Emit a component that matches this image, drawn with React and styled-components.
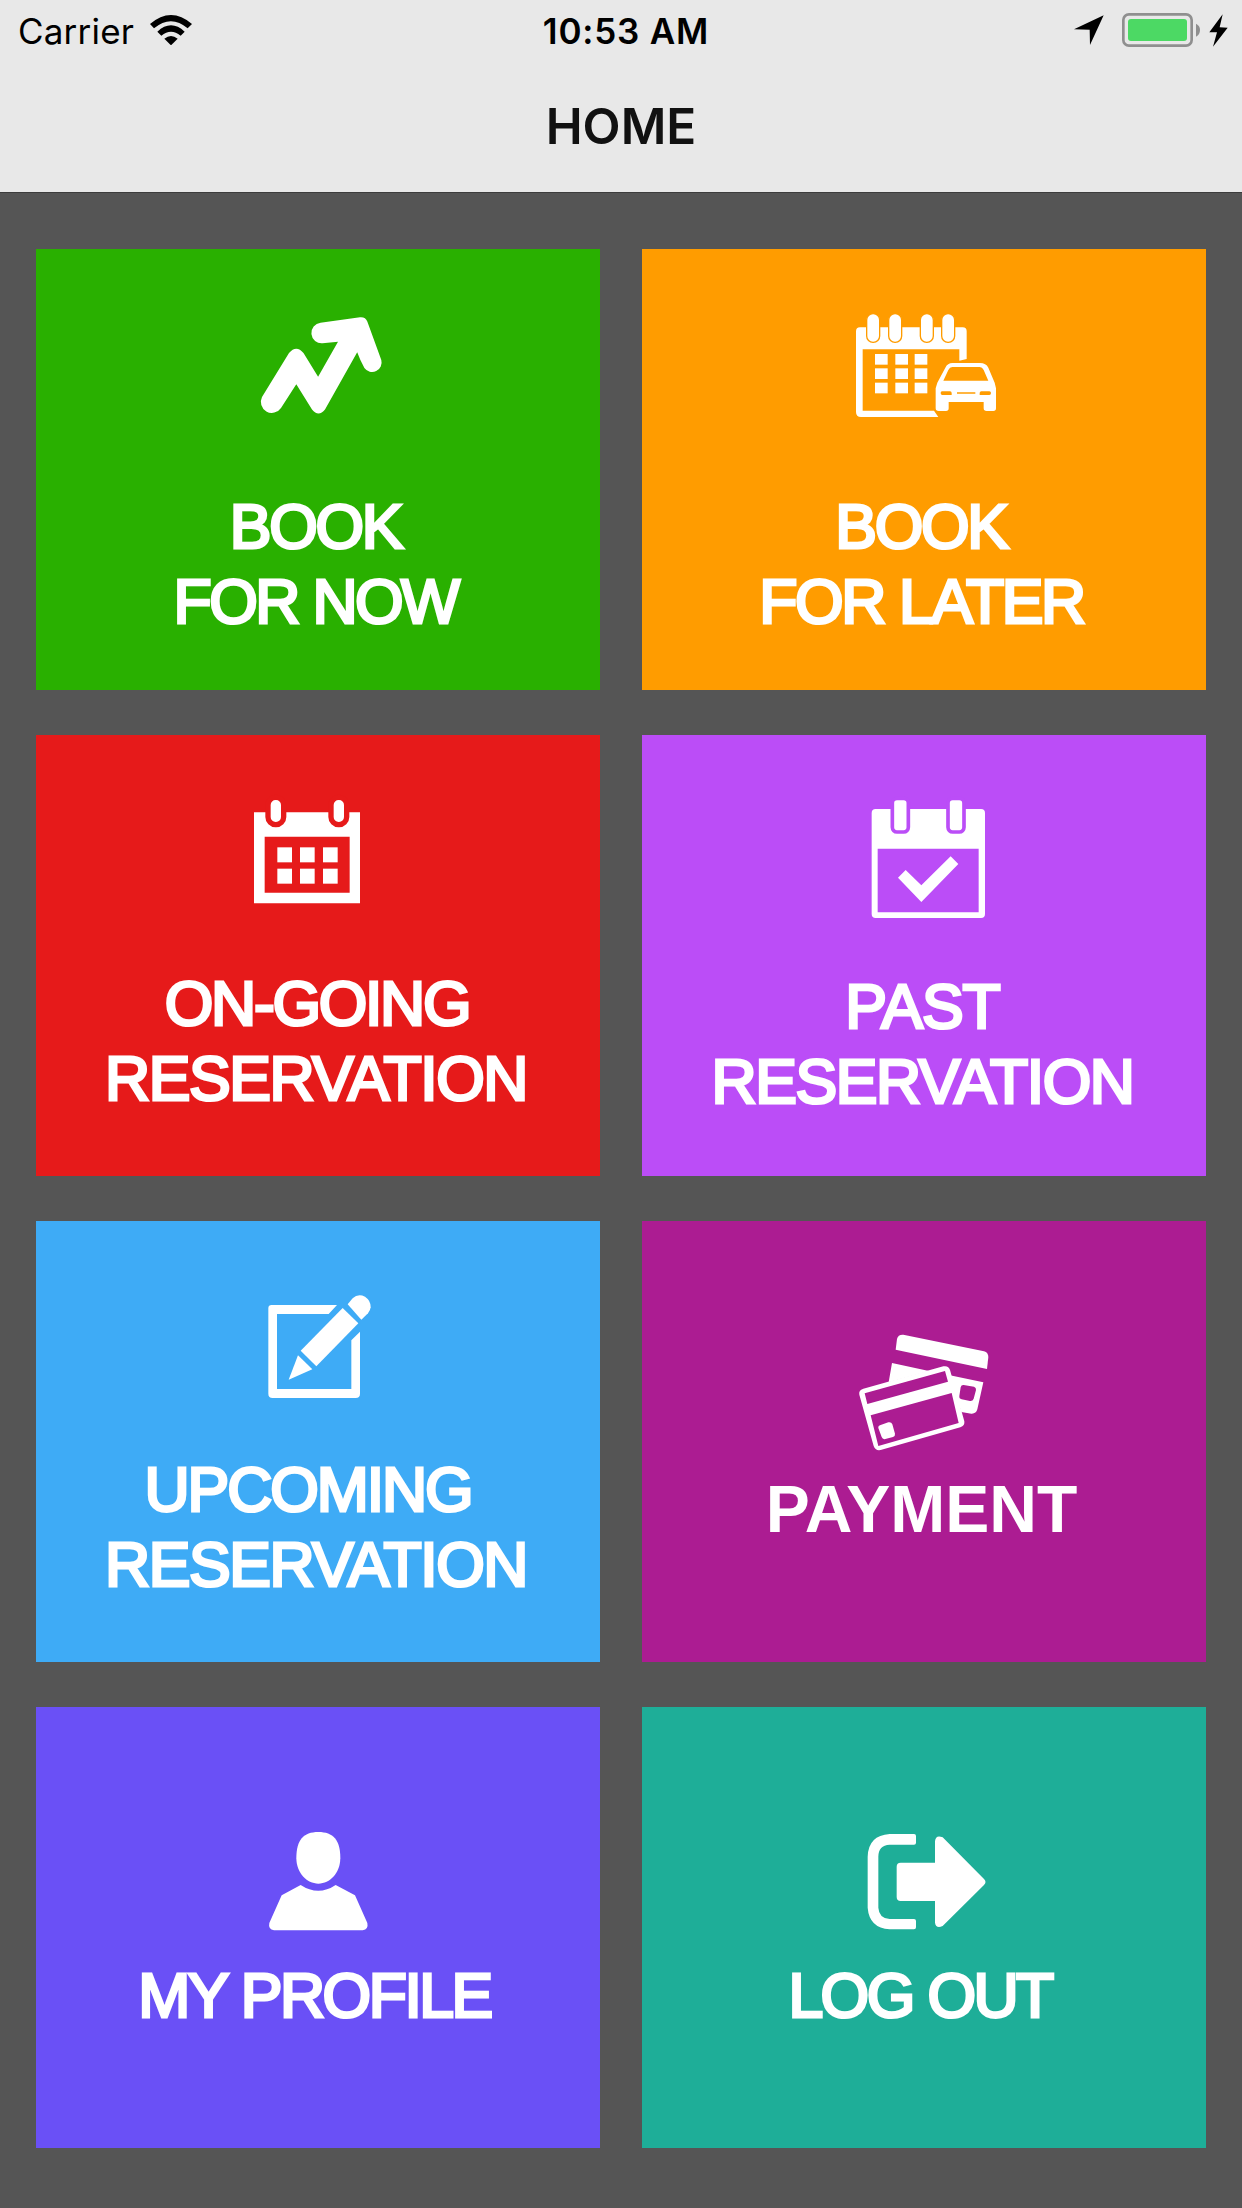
import React from "react";
import styled, { createGlobalStyle } from "styled-components";

const WifiIcon = () => (
  <svg width="42" height="30" viewBox="450 45 126 90">
    <path d="M450 72 Q513 18 576 72 L563 85 Q513 42 462 85Z" />
    <path d="M472 95 Q513 57 554 95 L542 107 Q513 83 484 107Z" />
    <path d="M493 116 Q513 100 533 116 L513 136Z" />
  </svg>
);

const LocationIcon = () => (
  <svg width="30" height="30" viewBox="103 47 90 90">
    <path d="M103 90 L192 48 L151 137 L150 91Z" />
  </svg>
);

const BatteryIcon = () => (
  <svg width="78" height="34" viewBox="246 39 234 102">
    <rect x="250" y="43" width="205" height="94" rx="17" fill="none" stroke="#8f8f8f" strokeWidth="8" />
    <rect x="264" y="57" width="177" height="66" rx="9" fill="#4cd964" />
    <path d="M468 71 Q480 77 480 90 Q480 104 468 110Z" fill="#8f8f8f" />
  </svg>
);

const BoltIcon = () => (
  <svg width="19" height="33" viewBox="506 42 57 99">
    <path d="M547 43 L507 97 H530 L518 140 L562 83 L538 82Z" />
  </svg>
);

const TrendIcon = () => (
  <svg width="160" height="130" viewBox="0 0 160 130">
    <path d="M24 97 L51 53 Q58.3 44.5 65.5 53 L80.1 76.7 L100 41.7 L84.5 43.3 A10.3 10.3 0 0 1 82.5 22.8 L122 17.3 Q127.5 16.8 129.3 21.5 L143.3 60 A9.5 9.5 0 0 1 126.4 68 Q122 60 119.2 52.3 L87 109.5 Q80.5 117.5 74 109.5 L58.3 84.3 L43 108 A11 11 0 0 1 24 97Z" />
  </svg>
);

const CalendarCarIcon = () => (
  <svg width="200" height="150" viewBox="-18 0 600 450">
    <path d="M90 112 H398 Q410 112 410 124 V207 L388 212 V178 H98 V362 H312 L325 381 H93 Q78 381 78 366 V124 Q78 112 90 112Z" />
    {[112, 178, 273, 337].map((x) => (
      <rect key={x} x={x - 2} y="71" width="39" height="86" rx="19" stroke="#ff9c00" strokeWidth="4" />
    ))}
    {[192, 235, 278].map((y) =>
      [135, 196, 254].map((x) => <rect key={`${x}-${y}`} x={x} y={y} width="38" height="32" />)
    )}
    <path
      fillRule="evenodd"
      d="M367 219 H450 Q468 219 475 233 L494 278 L498 295 V355 Q498 363 490 363 H470 Q461 363 461 355 V336 H356 V355 Q356 363 348 363 H326 Q317 363 317 355 V295 L322 278 L346 233 Q353 219 367 219Z M367 231 Q359 231 355 240 L340 272 H475 L461 240 Q457 231 449 231Z M336 304 Q332 304 332 309 Q332 315 337 315 H365 V309 Q365 304 360 304Z M454 304 Q449 304 449 309 V315 H478 Q483 315 483 309 Q483 304 478 304Z M381 307 V311 H436 V307Z"
    />
  </svg>
);

const CalendarGridIcon = () => (
  <svg width="160" height="140" viewBox="24 0 480 420">
    <path fillRule="evenodd" d="M72 97 H390 V370 H72Z M104 170 V338 H359 V170Z" />
    {[122, 311].map((x) => (
      <rect key={x} x={x - 8} y="52" width="47" height="82" rx="23" stroke="#e61a1a" strokeWidth="16" />
    ))}
    {[202, 266].map((y) =>
      [142, 210, 279].map((x) => <rect key={`${x}-${y}`} x={x} y={y} width="44" height="45" />)
    )}
  </svg>
);

const CalendarCheckIcon = () => (
  <svg width="160" height="150" viewBox="-18 0 480 450">
    <path
      fillRule="evenodd"
      d="M77 87 H393 Q405 87 405 99 V402 Q405 414 393 414 H77 Q65 414 65 402 V99 Q65 87 77 87Z M83 206 V397 H386 V206Z"
    />
    {[132, 299].map((x) => (
      <rect key={x} x={x - 5} y="55" width="48" height="101" rx="14" stroke="#bb4df7" strokeWidth="11" />
    ))}
    <path d="M144 293 L167 270 L214 316 L302 229 L325 252 L214 366Z" />
  </svg>
);

const PencilIcon = () => (
  <svg width="140" height="130" viewBox="-6 0 420 390">
    <path d="M65 75 H261 L236 102 H81 V327 H304 V181 L330 155 V341 Q330 354 317 354 H68 Q55 354 55 341 V85 Q55 75 65 75Z" />
    <path d="M278 84 L325 130 L199 259 L152 212Z" />
    <path d="M144 226 L187 268 L116 299Z" />
    <path d="M293 73 L308 55 Q324 40 345 50 Q363 62 362 82 Q361 92 354 100 L334 119Z" />
  </svg>
);

const CardsIcon = () => (
  <svg width="170" height="160" viewBox="-3 0 510 480">
    <path d="M171 87 Q174 73 190 74 L432 124 Q445 128 445 141 L441 177 L167 119Z" />
    <path
      fillRule="evenodd"
      d="M156 159 L267 183 L146 217Z M326 195 L430 217 L412 298 Q408 312 394 311 L364 306 L333 213Z M371 225 Q364 224 362 232 L358 258 Q357 266 365 268 L390 273 Q398 274 401 266 L408 240 Q409 232 402 230Z"
    />
    <path
      fillRule="evenodd"
      d="M70 236 L310 169 Q326 166 330 180 L373 334 Q375 347 361 352 L122 420 Q106 423 101 408 L58 254 Q55 241 70 236Z M74 250 L82 282 L324 215 L315 183Z M92 316 L115 408 L356 339 L335 249Z"
    />
    <path d="M122 345 L145 337 Q154 335 157 343 L165 371 Q166 379 159 381 L136 387 Q128 389 125 381 L115 354 Q114 347 122 345Z" />
  </svg>
);

const UserIcon = () => (
  <svg width="140" height="140" viewBox="-6 0 420 420">
    <path d="M205 66 C250 66 271 90 271 145 C270 190 240 221 205 221 C170 221 140 190 139 145 C139 90 160 66 205 66Z" />
    <path d="M152 225 Q205 260 257 225 L315 256 L352 339 Q356 358 338 361 H72 Q54 358 58 339 L95 256Z" />
  </svg>
);

const LogoutIcon = () => (
  <svg width="160" height="140" viewBox="-18 0 480 420">
    <path d="M119 72 H192 Q198 72 198 78 V98 Q198 104 192 104 H119 Q85 106 85 140 V293 Q87 325 119 327 H192 Q198 327 198 333 V352 Q198 358 192 358 H119 Q58 354 53 293 V140 Q55 76 119 72Z" />
    <path d="M152 158 H255 V94 Q257 73 278 82 L402 207 Q411 216 402 225 L278 348 Q258 357 255 338 V273 H152 Q140 273 140 261 V170 Q140 158 152 158Z" />
  </svg>
);

// gapTop: tile edge to icon, gapLabel: icon to first line
// lines: text, tracking, trailing space
const tiles = [
  { color: "#29b000", icon: TrendIcon, gapTop: 51, gapLabel: 59, lines: [["BOOK", -2.3, 5], ["FOR NOW", -2.6, 5]] },
  { color: "#ff9c00", icon: CalendarCarIcon, gapTop: 41, gapLabel: 49, lines: [["BOOK", -2.3, 6], ["FOR LATER", -2.4, 5]] },
  { color: "#e61a1a", icon: CalendarGridIcon, gapTop: 45, gapLabel: 46, lines: [["ON-GOING", -2.3, 2], ["RESERVATION", -1.4, 4]] },
  { color: "#bb4df7", icon: CalendarCheckIcon, gapTop: 45, gapLabel: 39, lines: [["PAST", -1, 3], ["RESERVATION", -1.4, 3]] },
  { color: "#3eabf6", icon: PencilIcon, gapTop: 59, gapLabel: 42, lines: [["UPCOMING", -2.1, 20], ["RESERVATION", -1.4, 4]] },
  { color: "#ac1c92", icon: CardsIcon, gapTop: 89, gapLabel: 2, bold: true, lines: [["PAYMENT", 0, 5]] },
  { color: "#6a50f6", icon: UserIcon, gapTop: 103, gapLabel: 8, lines: [["MY PROFILE", -2.5, 7]] },
  { color: "#1eae98", icon: LogoutIcon, gapTop: 103, gapLabel: 8, lines: [["LOG OUT", -2.6, 8]] },
];

const App = () => {
  return (
    <Screen>
      <GlobalStyle />
      <Header>
        <StatusBar>
          <Carrier>
            <span>Carrier</span>
            <WifiIcon />
          </Carrier>
          <Time>10:53 AM</Time>
          <Indicators>
            <LocationIcon />
            <BatteryIcon />
            <BoltIcon />
          </Indicators>
        </StatusBar>
        <Title>HOME</Title>
      </Header>
      <Menu>
        {tiles.map(({ color, icon: Icon, gapTop, gapLabel, bold, lines }) => (
          <Tile key={color} $color={color} $gapTop={gapTop}>
            <Icon />
            <Label $gap={gapLabel} $bold={bold}>
              {lines.map(([text, tracking, trail]) => (
                <Line key={text} $tracking={tracking} $trail={trail}>
                  {text}
                </Line>
              ))}
            </Label>
          </Tile>
        ))}
      </Menu>
    </Screen>
  );
};

const GlobalStyle = createGlobalStyle`
  * {
    box-sizing: border-box;
  }
  body {
    margin: 0;
    background: #555;
  }
  svg {
    display: block;
    flex-shrink: 0;
  }
`;

const Screen = styled.div`
  width: 1242px;
  height: 2208px;
  overflow: hidden;
  background: #555;
  font-family: "Liberation Sans", Arial, sans-serif;
`;

const Header = styled.header`
  height: 193px;
  background: #e8e8e8;
  border-bottom: 1px solid #3c3c3c;
  font-family: Inter, sans-serif;
`;

const StatusBar = styled.div`
  display: grid;
  grid-template-columns: 1fr auto 1fr;
  align-items: center;
  height: 60px;
  padding: 0 10px 0 18px;
  font-size: 35px;
  line-height: 58px;
  color: #000;
`;

const Carrier = styled.div`
  display: flex;
  align-items: center;
  gap: 16px;
  letter-spacing: 0.2px;

  span {
    padding-top: 2px;
  }
`;

const Time = styled.div`
  padding: 2px 0 0 2px;
  font-weight: 600;
  letter-spacing: 0.8px;
`;

const Indicators = styled.div`
  display: flex;
  align-items: center;
  justify-content: flex-end;
  padding-right: 4px;

  svg + svg {
    margin-left: 18px;
  }
  svg:last-child {
    margin-left: 9px;
  }
`;

const Title = styled.h1`
  margin: 0;
  text-align: center;
  font-size: 49.5px;
  font-weight: 600;
  line-height: 132px;
  color: #111;
`;

const Menu = styled.main`
  display: grid;
  grid-template-columns: repeat(2, 564px);
  grid-auto-rows: 441px;
  gap: 45px 42px;
  padding: 56px 36px 0;
`;

const Tile = styled.section`
  display: flex;
  flex-direction: column;
  align-items: center;
  padding-top: ${({ $gapTop }) => $gapTop}px;
  background: ${({ $color }) => $color};
  color: #fff;

  svg {
    fill: #fff;
  }
`;

const Label = styled.div`
  align-self: stretch;
  margin-top: ${({ $gap }) => $gap}px;
  text-align: center;
  white-space: nowrap;
  line-height: ${({ $bold }) => ($bold ? 75 : 74.5)}px;
  font-size: ${({ $bold }) => ($bold ? 66 : 62.5)}px;
  font-weight: ${({ $bold }) => ($bold ? 700 : 400)};
  -webkit-text-stroke: ${({ $bold }) => ($bold ? 0 : 3)}px #fff;
`;

const Line = styled.div`
  padding-right: ${({ $trail }) => $trail}px;
  letter-spacing: ${({ $tracking }) => $tracking}px;
`;

export default App;
